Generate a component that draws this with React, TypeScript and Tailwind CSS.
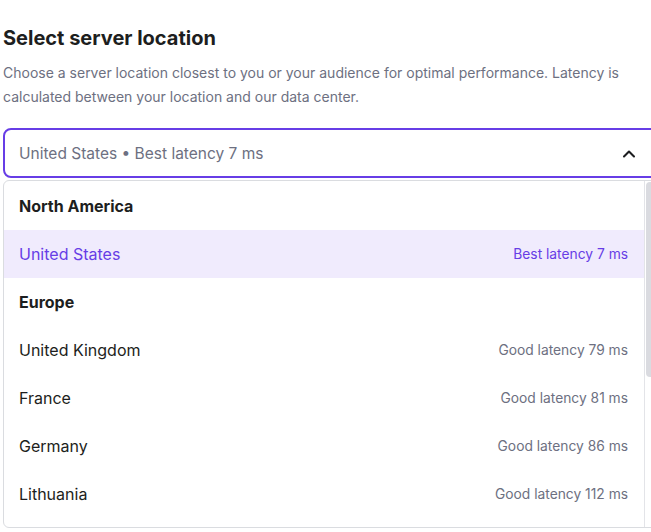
import { ChevronUp } from 'lucide-react';

type Row =
  | { kind: 'group'; label: string }
  | { kind: 'option'; label: string; latency: string; selected?: boolean };

const rows: Row[] = [
  { kind: 'group', label: 'North America' },
  { kind: 'option', label: 'United States', latency: 'Best latency 7 ms', selected: true },
  { kind: 'group', label: 'Europe' },
  { kind: 'option', label: 'United Kingdom', latency: 'Good latency 79 ms' },
  { kind: 'option', label: 'France', latency: 'Good latency 81 ms' },
  { kind: 'option', label: 'Germany', latency: 'Good latency 86 ms' },
  { kind: 'option', label: 'Lithuania', latency: 'Good latency 112 ms' },
];

export default function App() {
  return (
    <div className="h-[532px] w-[651px] overflow-hidden bg-white font-['Inter',sans-serif]">
      <div className="w-[670px] pl-[3px] pt-[25px]">
        <h1 className="text-[20px] leading-[26px] font-bold text-[#1d1e20]">
          Select server location
        </h1>
        <p className="mt-[10px] w-[620px] text-[14px] leading-[24px] text-[#6d7081]">
          Choose a server location closest to you or your audience for optimal performance. Latency is
          calculated between your location and our data center.
        </p>

        {/* ── Select trigger ── */}
        <div className="mt-[19px] flex h-[50px] items-center rounded-lg border-2 border-[#673de6] pt-[2px] pl-[14px]">
          <span className="flex-1 text-[15.5px] text-[#6d7081]">
            United States • Best latency 7 ms
          </span>
          <ChevronUp className="mr-[29px] h-5 w-5 text-[#1d1e20]" strokeWidth={2.5} />
        </div>

        {/* ── Options list ── */}
        <div className="mt-[2px] flex h-[348px] rounded-md border border-[#dadce0]">
          <div className="w-[641px] border-r border-[#e3e4e8] pt-px">
            {rows.map((row) =>
              row.kind === 'group' ? (
                <div
                  key={row.label}
                  className="flex h-[48px] items-center px-[15px] text-[16px] font-bold text-[#1d1e20]"
                >
                  {row.label}
                </div>
              ) : (
                <div
                  key={row.label}
                  className={`flex h-[48px] items-center justify-between pr-[16px] pl-[15px] ${
                    row.selected ? 'bg-[#f0ebfd] text-[#673de6]' : 'text-[#1d1e20]'
                  }`}
                >
                  <span className="text-[16px]">{row.label}</span>
                  <span
                    className={`text-[13.8px] ${row.selected ? 'text-[#673de6]' : 'text-[#6d7081]'}`}
                  >
                    {row.latency}
                  </span>
                </div>
              )
            )}
          </div>
          <div className="flex-1 pt-[1px] pl-[1px]">
            <div className="h-[195px] w-full rounded-sm bg-[#dadbe0]" />
          </div>
        </div>
      </div>
    </div>
  );
}
